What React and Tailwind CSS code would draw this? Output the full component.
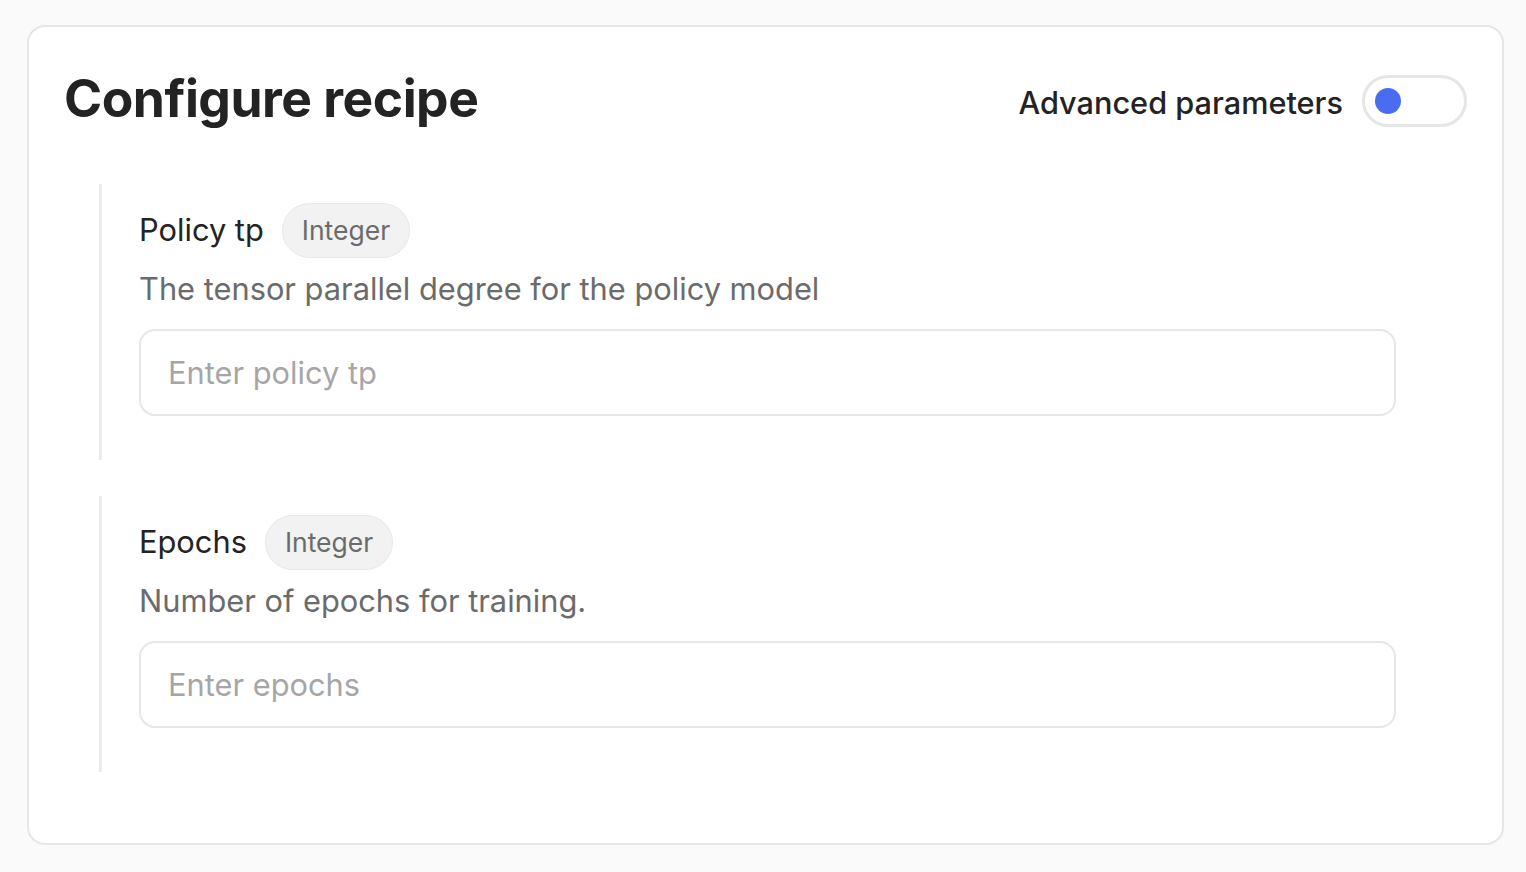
export default function App() {
  const fields = [
    { label: "Policy tp", desc: "The tensor parallel degree for the policy model", placeholder: "Enter policy tp" },
    { label: "Epochs", desc: "Number of epochs for training.", placeholder: "Enter epochs" },
  ];

  return (
    <div className="min-h-screen bg-[#fafafa] pl-[27px] pr-[22px] pt-[25px] font-['Inter',sans-serif]">
      <div className="bg-white border-2 border-[#e6e6e6] rounded-[18px] pl-[35px] pr-[35px] pt-[39px] pb-[71px]">
        {/* Header */}
        <div className="flex items-start justify-between">
          <h1 className="text-[51.6px] leading-[64px] font-bold text-[#232323] tracking-[-0.5px]">Configure recipe</h1>
          <div className="flex items-center gap-[19px] mt-[9px]">
            <span className="pt-[5px] text-[30.7px] font-medium text-[#232323]">Advanced parameters</span>
            <button className="w-[105px] h-[52px] rounded-full border-[3px] border-[#e6e6e6] bg-white flex items-center pl-[10px]">
              <span className="w-[26px] h-[26px] rounded-full bg-[#4a6cf0]"></span>
            </button>
          </div>
        </div>

        {/* Fields */}
        <div className="mt-[54px] flex flex-col gap-[36px]">
          {fields.map((f) => (
            <div key={f.label} className="border-l-[3px] border-[#ebebeb] ml-[35px] pl-[37px] pr-[71px] pt-[19px] pb-[44px]">
              <div className="flex items-center gap-[18px]">
                <span className="text-[30.8px] text-[#232323]">{f.label}</span>
                <span className="h-[55px] px-[19px] flex items-center rounded-full bg-[#f2f2f2] border border-[#e8e8e8] text-[26.5px] text-[#6b6b6b]">Integer</span>
              </div>
              <p className="mt-[12px] text-[30.8px] leading-[37px] text-[#6b6b6b]">{f.desc}</p>
              <input
                className="mt-[22px] w-full h-[87px] rounded-[16px] border-2 border-[#e6e6e6] px-[27px] text-[30.8px] placeholder-[#a6a6a6] outline-none"
                placeholder={f.placeholder}
              />
            </div>
          ))}
        </div>
      </div>
    </div>
  );
}
